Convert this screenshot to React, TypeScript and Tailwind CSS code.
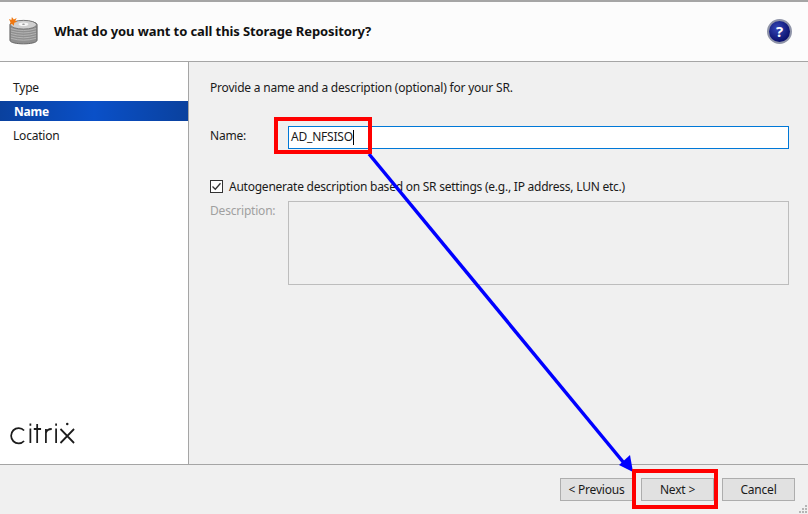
export default function App() {
  const font = { fontFamily: '"Noto Sans", "Noto Sans CJK KR", sans-serif' };
  return (
    <div className="relative w-[808px] h-[514px] overflow-hidden flex flex-col bg-[#f0f0f0] text-[12px] tracking-[-0.2px] text-[#1a1a1a]" style={font}>
      <header className="h-[62px] shrink-0 flex items-center bg-[#fcfcfc] border-t-2 border-b border-[#a5a5a5] pl-[8px] pr-[15px] pb-[1px]">
        <svg width="31" height="31" viewBox="0 0 32 32" className="shrink-0">
          <path d="M2 9 C2 4 30 4 30 9 V25 C30 30 2 30 2 25 Z" fill="#8f8f8f" stroke="#666" />
          <g stroke="#b5b5b5" strokeWidth="1">
            <path d="M3 13 Q16 17 29 13M3 15.500 Q16 19.500 29 15.500M3 18 Q16 22 29 18M3 20.500 Q16 24.500 29 20.500M3 23 Q16 27 29 23" fill="none" />
          </g>
          <ellipse cx="16" cy="9" rx="13.500" ry="4.500" fill="#cfcfcf" stroke="#777" />
          <ellipse cx="16" cy="8.500" rx="5" ry="1.800" fill="#f4f4f4" />
          <ellipse cx="16" cy="8.500" rx="1.500" ry="0.700" fill="#999" />
          <path d="M1 3 L3.500 4 L4 1 L6 3.500 L9 2 L7.500 5 L9.500 6 L6.500 7 L6 10 L4 8 L2 9 L2.500 6.500 Z" fill="#f07810" />
        </svg>
        <h1 className="ml-[15px] text-[13px] leading-[18px] tracking-[-0.1px] font-bold text-[#111] whitespace-nowrap">What do you want to call this Storage Repository?</h1>
        <div className="ml-auto mr-[1px] w-[25px] h-[25px] rounded-full bg-[radial-gradient(circle_at_40%_35%,#3448b8,#0c1270_70%)] border-2 border-[#8f94a8] flex items-center justify-center text-white font-bold text-[15px] leading-none">?</div>
      </header>

      <div className="flex-1 flex min-h-0">
        <aside className="w-[189px] shrink-0 bg-white border-r border-[#a5a5a5] flex flex-col pt-[14px] pb-[19px]">
          <div className="h-[24px] pl-[13px] flex items-center">Type</div>
          <div className="h-[20px] my-[1px] pl-[14px] pt-[1px] flex items-center font-bold text-white bg-[linear-gradient(90deg,#0a419e,#0a50c8_50%,#0a419e)]">Name</div>
          <div className="h-[24px] pl-[13px] mt-[2px] flex items-center">Location</div>
          <svg width="66" height="24" viewBox="0 0 68 24" preserveAspectRatio="none" className="mt-auto ml-[10px] shrink-0" fill="none" stroke="#1c1c1c" strokeWidth="1.800">
            <path d="M14.500 9.500 A7.700 7.700 0 1 0 14.500 20" />
            <path d="M21 7.500 V22 M21 2.500 V4.800" />
            <path d="M28 3 V22 M24.500 8 H32" />
            <path d="M37 22 V8 M37 12 Q38 8 43 8" />
            <path d="M47.500 7.500 V22 M47.500 2.500 V4.800" />
            <path d="M52 8 L66 22 M66 8 L52 22" />
            <circle cx="59" cy="3" r="1.300" fill="#1c1c1c" stroke="none" />
          </svg>
        </aside>

        <main className="flex-1 pl-[21px] pr-[19px] pt-[16px] flex flex-col">
          <p className="h-[20px] leading-[20px]">Provide a name and a description (optional) for your SR.</p>
          <div className="flex mt-[28px]">
            <label className="w-[78px] leading-[19px]">Name:</label>
            <div className="flex-1 h-[23px] bg-white border border-[#0078d7] flex items-center pl-[2px] pb-[1px]">
              <span>AD_NFSISO</span><span className="w-px h-[15px] bg-black" />
            </div>
          </div>
          <div className="flex items-center mt-[27px] h-[20px]">
            <span className="w-[13px] h-[13px] bg-white border border-[#333] flex items-center justify-center">
              <svg width="11" height="11" viewBox="0 0 11 11" fill="none" stroke="#333" strokeWidth="1.300"><path d="M1.500 5.500 L4.300 8.300 L9.500 2.300" /></svg>
            </span>
            <span className="ml-[6px] pt-[1px] tracking-[-0.24px]">Autogenerate description based on SR settings (e.g., IP address, LUN etc.)</span>
          </div>
          <div className="flex mt-[5px]">
            <label className="w-[78px] text-[#a0a0a0] leading-[20px]">Description:</label>
            <div className="flex-1 h-[84px] bg-[#f0f0f0] border border-[#bdbdbd]" />
          </div>
        </main>
      </div>

      <footer className="h-[50px] shrink-0 border-t border-[#a5a5a5] flex items-start justify-end gap-[8px] pt-[13px] pr-[13px] relative">
        {["< Previous", "Next >", "Cancel"].map((t) => (
          <button key={t} className="w-[73px] h-[23px] bg-[#e1e1e1] border border-[#adadad] flex items-center justify-center text-[12px] text-[#1a1a1a]">{t}</button>
        ))}
        <svg width="11" height="11" viewBox="0 0 11 11" className="absolute right-0 bottom-0" fill="#b5b5b5">
          <rect x="8" y="2" width="2" height="2" /><rect x="5" y="5" width="2" height="2" /><rect x="8" y="5" width="2" height="2" />
          <rect x="2" y="8" width="2" height="2" /><rect x="5" y="8" width="2" height="2" /><rect x="8" y="8" width="2" height="2" />
        </svg>
      </footer>

      <svg width="808" height="514" className="absolute inset-0 pointer-events-none">
        <line x1="369" y1="154" x2="624" y2="463" stroke="#0000ff" strokeWidth="3.500" />
        <polygon points="633,472 619,465 630,455" fill="#0000ff" />
        <rect x="276" y="119" width="94" height="33" fill="none" stroke="#ff0000" strokeWidth="4" />
        <rect x="634" y="471" width="82" height="36" fill="none" stroke="#ff0000" strokeWidth="4" />
      </svg>
    </div>
  );
}
